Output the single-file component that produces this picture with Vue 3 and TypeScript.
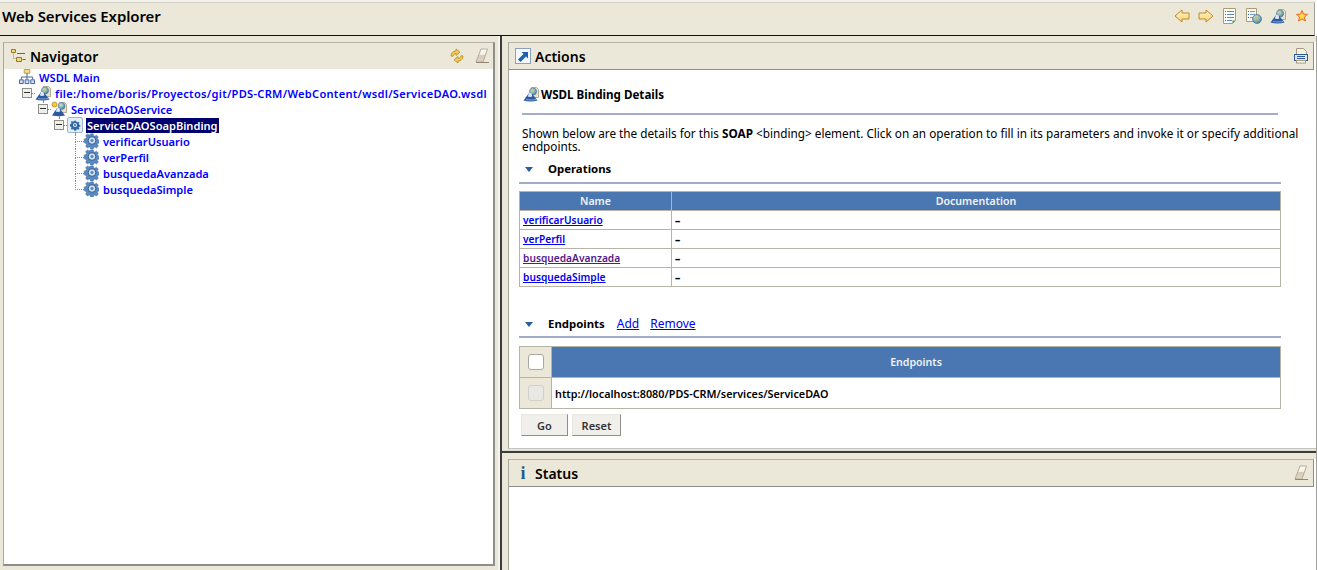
<script setup lang="ts">
type Row = { label: string; depth: number; icon: string; kind: 'root' | 'node' | 'leaf' | 'last'; selected?: boolean; long?: boolean }

const rows: Row[] = [
  { label: 'WSDL Main', depth: 0, icon: 'i-main', kind: 'root' },
  { label: 'file:/home/boris/Proyectos/git/PDS-CRM/WebContent/wsdl/ServiceDAO.wsdl', depth: 0, icon: 'i-wsdl', kind: 'node', long: true },
  { label: 'ServiceDAOService', depth: 1, icon: 'i-service', kind: 'node' },
  { label: 'ServiceDAOSoapBinding', depth: 2, icon: 'i-binding', kind: 'node', selected: true },
  { label: 'verificarUsuario', depth: 3, icon: 'i-gear', kind: 'leaf' },
  { label: 'verPerfil', depth: 3, icon: 'i-gear', kind: 'leaf' },
  { label: 'busquedaAvanzada', depth: 3, icon: 'i-gear', kind: 'leaf' },
  { label: 'busquedaSimple', depth: 3, icon: 'i-gear', kind: 'last' },
]

const operations = [
  { name: 'verificarUsuario', visited: false },
  { name: 'verPerfil', visited: false },
  { name: 'busquedaAvanzada', visited: true },
  { name: 'busquedaSimple', visited: false },
]

const toolbar = ['i-back', 'i-forward', 'i-doc', 'i-docglobe', 'i-wsdl', 'i-star']
</script>

<template>
  <div class="explorer">
    <svg class="defs" width="0" height="0">
      <defs>
        <linearGradient id="g-arrow" x1="0" y1="0" x2="0" y2="1">
          <stop offset="0" stop-color="#fff6d0" />
          <stop offset="1" stop-color="#f6d27a" />
        </linearGradient>
        <linearGradient id="g-eraser" x1="0" y1="0" x2="0" y2="1">
          <stop offset="0" stop-color="#fbfaf6" />
          <stop offset="0.45" stop-color="#f1eee6" />
          <stop offset="0.5" stop-color="#dcc9b8" />
          <stop offset="1" stop-color="#e3d3c4" />
        </linearGradient>
        <radialGradient id="g-globe" cx="0.4" cy="0.35" r="0.7">
          <stop offset="0" stop-color="#cfe6d0" />
          <stop offset="1" stop-color="#3f7f9f" />
        </radialGradient>
        <symbol id="i-back" viewBox="0 0 16 16">
          <path d="M1 8 8 2v3h7v6H8v3z" fill="url(#g-arrow)" stroke="#c08a1e" />
        </symbol>
        <symbol id="i-forward" viewBox="0 0 16 16">
          <path d="M15 8 8 2v3H1v6h7v3z" fill="url(#g-arrow)" stroke="#c08a1e" />
        </symbol>
        <symbol id="i-doc" viewBox="0 0 16 16">
          <path d="M1.500.5h12v12l-3 3h-9z" fill="#fbfbf6" stroke="#a89f7a" />
          <path d="M3 3h1v1H3zm0 3h1v1H3zm0 3h1v1H3zm0 3h1v1H3z" fill="#2f66b0" />
          <path d="M5 3h7v1H5zm0 3h7v1H5zm0 3h7v1H5zm0 3h5v1H5z" fill="#5c88c8" />
          <path d="M10.500 15.500v-3h3z" fill="#3f9a4a" />
        </symbol>
        <symbol id="i-docglobe" viewBox="0 0 16 16">
          <path d="M.5.500h10v13H.5z" fill="#f7f6ee" stroke="#a89f7a" />
          <path d="M2 3h1v1H2zm0 3h1v1H2zm0 3h1v1H2z" fill="#2f66b0" />
          <path d="M4 3h5v1H4zm0 3h5v1H4zm0 3h3v1H4z" fill="#7f9ccc" />
          <circle cx="11" cy="11" r="4.500" fill="url(#g-globe)" stroke="#3e6f8c" stroke-width=".6" />
          <path d="M9 9.500c1-1 2 0 2.500 1s-1 2-1.500 1.500zM12.500 8c1 .5 2 1.500 2 2l-1.500.5z" fill="#c8b45a" />
        </symbol>
        <symbol id="i-wsdl" viewBox="0 0 16 16">
          <path d="M8.500 1.500h5l2 2v8h-7z" fill="#e8e2cc" stroke="#a39a80" stroke-width=".8" />
          <circle cx="10" cy="5.500" r="3.600" fill="url(#g-globe)" stroke="#3e6f8c" stroke-width=".5" />
          <path d="M8.500 4c1-.8 2-.2 2.300.8L9 6.500z" fill="#d1c46a" />
          <path d="M6 7 .5 14.500c4.500 1.200 9.500 1.200 14 0L8.500 7z" fill="#2c5aa0" />
          <path d="M6 7h2.500l.8 3.500c-1.500.5-3 .5-4.500 0z" fill="#dfe8f6" />
          <path d="M3 13.500c3 .6 7 .6 10 0" fill="none" stroke="#9db9e2" stroke-width=".8" />
        </symbol>
        <symbol id="i-service" viewBox="0 0 16 16">
          <circle cx="3.500" cy="3.500" r="2.500" fill="#f4c93c" stroke="#a9801c" stroke-width=".7" />
          <path d="M8.500 1.500h5l2 2v8h-7z" fill="#e8e2cc" stroke="#a39a80" stroke-width=".8" />
          <circle cx="10.500" cy="5" r="3.500" fill="url(#g-globe)" stroke="#3e6f8c" stroke-width=".5" />
          <path d="M6 7 1 14.500c4.500 1 9.500 1 13 0L8.500 7z" fill="#2c5aa0" />
          <path d="M6 7h2.500l.8 3.500c-1.500.5-3 .5-4.500 0z" fill="#dfe8f6" />
        </symbol>
        <symbol id="i-main" viewBox="0 0 17 17">
          <path d="M5.500.5h6v4h-6z" fill="#f6dc86" stroke="#b79a42" />
          <path d="M8.500 4.500v4M2.500 11V8.500h12V11M8.500 8.500V11" fill="none" stroke="#3d5f97" />
          <path d="M.5 11.500h4v4h-4zm6 0h4v4h-4zm6 0h4v4h-4z" fill="#cfdcf0" stroke="#3d5f97" />
        </symbol>
        <symbol id="i-star" viewBox="0 0 16 16">
          <path d="m8 2.500 1.600 3.600 3.900.3-3 2.600.9 4L8 10.900 4.600 13l.9-4-3-2.600 3.900-.3z" fill="#fbc64a" stroke="#ee6a1f" />
          <path d="m8 5 .8 2.300h2.200L9.200 8.700l.7 2.200L8 9.600l-1.900 1.300.7-2.200L5 7.300h2.200z" fill="#ffe14f" />
        </symbol>
        <symbol id="i-gear" viewBox="0 0 16 16">
          <g transform="translate(1 -.5)">
            <path d="M6.600 .8h2.800l.4 2 1.300.6 1.800-1.100 2 2-1.100 1.700.6 1.400 2 .4v2.800l-2 .4-.6 1.400 1.100 1.700-2 2-1.800-1.100-1.300.6-.4 2H6.600l-.4-2-1.300-.6-1.800 1.100-2-2 1.100-1.700-.6-1.400-2-.4V6.400l2-.4.600-1.400-1.100-1.700 2-2 1.800 1.100 1.300-.6z" fill="#5a88c0" stroke="#2e5a94" stroke-width=".5" transform="translate(.6 .6) scale(.92)" />
            <circle cx="8" cy="8" r="3.800" fill="#dbe8f7" stroke="#2e5a94" stroke-width="1" />
            <circle cx="8" cy="8" r="1.700" fill="#5f8fc8" />
          </g>
        </symbol>
        <symbol id="i-binding" viewBox="0 0 16 16">
          <rect x=".5" y=".5" width="15" height="15" rx="1.500" fill="#e4ecf6" stroke="#9fb2cf" />
          <path d="M6.700 2.800h2.600l.3 1.300 1.300.6 1.200-.7 1.100 1.200-.7 1.100.5 1.300 1.300.3v1.800l-1.300.3-.5 1.300.7 1.100-1.200 1.100-1.100-.6-1.300.5-.3 1.300H7l-.3-1.300-1.300-.5-1.100.6-1.200-1.100.7-1.100-.5-1.300-1.300-.3V7.200l1.300-.3.500-1.300-.7-1.100 1.200-1.200 1.100.7 1.300-.6z" fill="#2f6aa8" transform="translate(1.300 1.300) scale(.84)" />
          <circle cx="8" cy="8" r="2.100" fill="#dbe8f7" />
          <circle cx="8" cy="8" r="1" fill="#2f6aa8" />
        </symbol>
        <symbol id="i-nav" viewBox="0 0 16 16">
          <path d="M1.500 1.500h4v3h-4zM6.500 9.500h5v4h-5z" fill="#f5d878" stroke="#9a7a24" />
          <path d="M3.500 4.500v6h3" fill="none" stroke="#8f8a72" stroke-dasharray="1 1" />
          <path d="M7 5.500h8M12.500 11.500h3" stroke="#1f78a8" />
        </symbol>
        <symbol id="i-sync" viewBox="0 0 16 16">
          <path d="M2 8c0-3 2-5 5-5V1l4 3.200L7 7.500V5.500c-1.600 0-2.600 1-3 2.800z" fill="#f4cb55" stroke="#b98a1c" stroke-width=".8" />
          <path d="M14 8c0 3-2 5-5 5v2l-4-3.200L9 8.500v2c1.600 0 2.600-1 3-2.800z" fill="#f4cb55" stroke="#b98a1c" stroke-width=".8" />
        </symbol>
        <symbol id="i-eraser" viewBox="0 0 16 16">
          <path d="M7 1h6.500L9 14H2z" fill="url(#g-eraser)" stroke="#b5ad9a" />
          <path d="M2 14.500h13" stroke="#8e8878" />
        </symbol>
        <symbol id="i-actions" viewBox="0 0 16 16">
          <rect x=".5" y=".5" width="15" height="15" fill="#f4f7fb" stroke="#8aa0c0" />
          <path d="M3 11.500 8.500 6 6.500 4H13v6.500l-2-2L5.500 14z" fill="#1f5fb0" />
        </symbol>
        <symbol id="i-print" viewBox="0 0 16 16">
          <path d="M3.500.5h7l3 3v4h-10z" fill="#f4f1e4" stroke="#a39a80" />
          <rect x="1.500" y="6.500" width="13" height="6" fill="#dfe6f2" stroke="#2f5c98" />
          <path d="M4 8.500h8M4 10.500h8" stroke="#2f5c98" />
          <rect x="3.500" y="12.500" width="9" height="2.500" fill="#fff" stroke="#a39a80" />
        </symbol>
      </defs>
    </svg>

    <header class="topbar">
      <span class="topbar-title">Web Services Explorer</span>
      <div class="tools">
        <svg v-for="t in toolbar" :key="t" class="icon"><use :href="'#' + t" /></svg>
      </div>
    </header>

    <main class="workspace">
      <section class="col-left">
        <div class="pane nav-pane">
          <div class="pane-head">
            <svg class="icon"><use href="#i-nav" /></svg>
            <span class="pane-title">Navigator</span>
            <span class="spacer"></span>
            <svg class="icon head-sync"><use href="#i-sync" /></svg>
            <svg class="icon"><use href="#i-eraser" /></svg>
          </div>
          <div class="pane-body tree">
            <div v-for="row in rows" :key="row.label" class="tree-row" :class="'depth-' + row.depth">
              <span v-if="row.kind === 'node'" class="cell cell-node">
                <span class="expander"></span>
              </span>
              <span v-else-if="row.kind !== 'root'" class="cell" :class="row.kind === 'last' ? 'cell-last' : 'cell-leaf'"></span>
              <span class="cell" :class="{ 'cell-stub': row.kind === 'node' }">
                <svg class="icon"><use :href="'#' + row.icon" /></svg>
              </span>
              <a class="tree-link" :class="{ selected: row.selected, long: row.long }">{{ row.label }}</a>
            </div>
          </div>
        </div>
      </section>

      <div class="v-sash"></div>

      <section class="col-right">
        <div class="actions-wrap">
          <div class="pane actions-pane">
            <div class="pane-head">
              <svg class="icon"><use href="#i-actions" /></svg>
              <span class="pane-title">Actions</span>
              <span class="spacer"></span>
              <svg class="icon"><use href="#i-print" /></svg>
            </div>
            <div class="pane-body details">
              <h1 class="details-title">
                <svg class="icon"><use href="#i-wsdl" /></svg>
                WSDL Binding Details
              </h1>
              <hr class="rule rule-main" />
              <p class="intro">
                Shown below are the details for this <b>SOAP</b> &lt;binding&gt; element. Click on an operation to fill in its parameters and invoke it or specify additional endpoints.
              </p>

              <div class="section-head ops-head">
                <span class="twisty"></span>
                <b>Operations</b>
              </div>
              <hr class="rule" />
              <table class="grid ops">
                <thead>
                  <tr><th class="col-name">Name</th><th>Documentation</th></tr>
                </thead>
                <tbody>
                  <tr v-for="op in operations" :key="op.name">
                    <td><a class="op-link" :class="{ visited: op.visited }">{{ op.name }}</a></td>
                    <td><b>–</b></td>
                  </tr>
                </tbody>
              </table>

              <div class="section-head endpoints-head">
                <span class="twisty"></span>
                <b>Endpoints</b>
                <a class="plain-link">Add</a>
                <a class="plain-link">Remove</a>
              </div>
              <hr class="rule" />
              <table class="grid eps">
                <thead>
                  <tr>
                    <td class="check-col"><span class="check"></span></td>
                    <th>Endpoints</th>
                  </tr>
                </thead>
                <tbody>
                  <tr>
                    <td class="check-col"><span class="check off"></span></td>
                    <td class="ep-url">http://localhost:8080/PDS-CRM/services/ServiceDAO</td>
                  </tr>
                </tbody>
              </table>
              <div class="buttons">
                <button class="btn btn-go">Go</button>
                <button class="btn btn-reset">Reset</button>
              </div>
            </div>
          </div>
        </div>

        <div class="h-sash"></div>

        <div class="status-wrap">
          <div class="pane status-pane">
            <div class="pane-head">
              <span class="info-i">i</span>
              <span class="pane-title">Status</span>
              <span class="spacer"></span>
              <svg class="icon"><use href="#i-eraser" /></svg>
            </div>
            <div class="pane-body"></div>
          </div>
        </div>
      </section>
    </main>
  </div>
</template>

<style>
html, body {
  margin: 0;
  overflow: hidden;
}
</style>

<style scoped>
.explorer {
  width: 1317px;
  height: 570px;
  box-sizing: border-box;
  display: flex;
  flex-direction: column;
  background: #fff;
  border-top: 2px solid #f2f1ec;
  font-family: "Noto Sans", "Open Sans", sans-serif;
  font-size: 12px;
  color: #000;
  overflow: hidden;
}
.defs {
  position: absolute;
}
.icon {
  width: 16px;
  height: 16px;
  flex: none;
  display: block;
}
.spacer {
  flex: 1;
}

.topbar {
  height: 26px;
  margin-right: 2px;
  padding: 0 4px 6px 2px;
  background: #ebe8d9;
  border-top: 1px solid #d4d2c6;
  border-right: 1px solid #a0a09a;
  border-bottom: 1px solid #111;
  display: flex;
  align-items: center;
}
.topbar-title {
  font-size: 15px;
  font-weight: 600;
  letter-spacing: -0.1px;
}
.tools {
  margin-left: auto;
  display: flex;
  gap: 8px;
}

.workspace {
  flex: 1;
  display: flex;
  min-height: 0;
  background: #ebe8d9;
}
.col-left {
  width: 498px;
  flex: none;
  padding: 6px 3px 4px 3px;
  box-sizing: border-box;
  display: flex;
}
.v-sash {
  width: 2px;
  flex: none;
  background: #3c3c3c;
  box-shadow: -2px 0 0 #f4f3ee;
  margin-left: 2px;
}
.col-right {
  flex: 1;
  min-width: 0;
  display: flex;
  flex-direction: column;
  border-right: 1px solid #a0a09a;
}
.actions-wrap {
  height: 414px;
  padding: 6px 0 1px 6px;
  box-sizing: border-box;
  display: flex;
}
.h-sash {
  height: 2px;
  flex: none;
  background: #3c3c3c;
  border-top: 1px solid #dcdcd6;
}
.status-wrap {
  flex: 1;
  min-height: 0;
  padding: 6px 0 0 6px;
  display: flex;
}

.pane {
  flex: 1;
  min-width: 0;
  display: flex;
  flex-direction: column;
  border-left: 1px solid #a8a79e;
  background: #fff;
}
.nav-pane {
  border-top: 1px solid #b5b3a6;
  border-right: 2px solid #8f8f8a;
  border-bottom: 2px solid #8f8f8a;
}
.actions-pane {
  border-bottom: 1px solid #c4c4be;
}
.pane-head {
  height: 26px;
  flex: none;
  display: flex;
  align-items: center;
  padding: 0 3px 0 6px;
  background: #ebe8d9;
  border-bottom: 1px solid #8f8f8a;
}
.col-right .pane-head {
  margin-right: 2px;
  padding-right: 4px;
  border-top: 1px solid #b5b3a6;
  border-right: 1px solid #8f8f8a;
}
.pane-title {
  font-size: 14px;
  font-weight: 600;
  margin-left: 4px;
}
.head-sync {
  margin-right: 9px;
}
.pane-body {
  flex: 1;
  min-height: 0;
  background: #fff;
}

.tree {
  padding-left: 15px;
  margin-top: -1px;
}
.tree-row {
  height: 16px;
  display: flex;
  align-items: center;
}
.depth-1 { padding-left: 16px; }
.depth-2 { padding-left: 32px; }
.depth-3 { padding-left: 48px; }
.cell {
  width: 16px;
  height: 16px;
  flex: none;
  position: relative;
}
.cell-node::after {
  content: "";
  position: absolute;
  left: 13px;
  top: 8px;
  width: 3px;
  border-top: 1px dotted #8a8a8a;
}
.cell-stub::after {
  content: "";
  position: absolute;
  left: 8px;
  top: 15px;
  height: 2px;
  border-left: 1px dotted #8a8a8a;
}
.cell-leaf::before,
.cell-last::before {
  content: "";
  position: absolute;
  left: 8px;
  top: 0;
  width: 8px;
  border-left: 1px dotted #8a8a8a;
  border-bottom: 1px dotted #8a8a8a;
  height: 8px;
}
.cell-leaf::after {
  content: "";
  position: absolute;
  left: 8px;
  top: 8px;
  height: 8px;
  border-left: 1px dotted #8a8a8a;
}
.expander {
  position: absolute;
  left: 3px;
  top: 3px;
  width: 8px;
  height: 8px;
  border: 1px solid #8f8f8a;
  background: #efefea;
}
.expander::after {
  content: "";
  position: absolute;
  left: 1px;
  top: 3px;
  width: 6px;
  height: 1px;
  background: #333;
}
.tree-link {
  color: #0000ff;
  font-size: 11.100px;
  font-weight: 600;
  margin-left: 4px;
  line-height: 15px;
  white-space: nowrap;
}
.tree-link.long {
  letter-spacing: 0.28px;
}
.tree-link.selected {
  background: #00006e;
  color: #fff;
  margin-left: 3px;
  padding: 0 1px;
}

.details {
  padding: 15px 0 0 10px;
}
.details-title {
  margin: 0 0 0 4px;
  height: 18px;
  display: flex;
  align-items: center;
  gap: 2px;
  font-size: 11.600px;
  font-weight: 700;
}
.rule {
  border: 0;
  height: 2px;
  margin: 0;
  width: 762px;
  background: #a3acc8;
}
.rule-main {
  width: 756px;
  margin: 10px 0 0 3px;
}
.intro {
  margin: 12px 0 0 3px;
  font-size: 11.750px;
  line-height: 13px;
  width: 785px;
}
.section-head {
  margin-top: 7px;
  margin-bottom: 4px;
  height: 18px;
  display: flex;
  align-items: center;
  font-size: 12px;
  padding-left: 6px;
  gap: 12px;
}
.section-head b {
  font-size: 11.400px;
}
.ops-head {
  margin-top: 6px;
  margin-bottom: 5px;
}
.twisty {
  width: 0;
  height: 0;
  margin: 3px 3px 0 0;
  border-left: 4px solid transparent;
  border-right: 4px solid transparent;
  border-top: 5px solid #2b5c9e;
}
.endpoints-head {
  margin-top: 27px;
}
.plain-link {
  color: #0000ee;
  text-decoration: underline;
}
.plain-link:last-child {
  margin-left: -1px;
}
.grid {
  border-collapse: collapse;
  width: 762px;
  margin-top: 7px;
  table-layout: fixed;
  font-size: 10.600px;
}
.grid.eps {
  margin-top: 8px;
}
.grid th,
.grid td {
  border: 1px solid #b6b4a6;
  padding: 0;
}
.grid th {
  background: #4a77b2;
  color: #f2f2f2;
  font-weight: 600;
  text-align: center;
}
.ops th {
  height: 18px;
}
.ops td {
  height: 18px;
  padding-left: 3px;
  font-weight: 600;
}
.col-name {
  width: 151px;
}
.op-link {
  color: #0000ee;
  text-decoration: underline;
  font-size: 10.200px;
  font-weight: 600;
}
.op-link.visited {
  color: #551a8b;
}
.eps th {
  height: 30px;
}
.eps td {
  height: 30px;
}
.grid .check-col {
  width: 31px;
  background: #ebe8d9;
  text-align: center;
  padding: 0;
}
.check {
  display: inline-block;
  vertical-align: middle;
  width: 14px;
  height: 14px;
  border: 1px solid #a8a8a0;
  border-radius: 3px;
  background: #fff;
}
.check.off {
  background: #e8e8e4;
  border-color: #d0d0c8;
}
.grid .ep-url {
  padding-left: 3px;
  font-size: 10.800px;
  font-weight: 600;
}
.buttons {
  display: flex;
  gap: 4px;
  margin: 5px 0 0 2px;
}
.btn {
  height: 22px;
  border: 0;
  border-right: 1px solid #8f8f8a;
  border-bottom: 1px solid #8f8f8a;
  border-top: 1px solid #e8e8e0;
  border-left: 1px solid #e8e8e0;
  background: #f0efec;
  color: #333;
  font-family: inherit;
  font-size: 11px;
  font-weight: 600;
  padding: 0;
}
.btn-go { width: 47px; }
.btn-reset { width: 49px; }
.info-i {
  width: 16px;
  text-align: center;
  font-family: "Liberation Serif", serif;
  font-size: 18px;
  font-weight: 700;
  color: #1f5a96;
}
</style>
